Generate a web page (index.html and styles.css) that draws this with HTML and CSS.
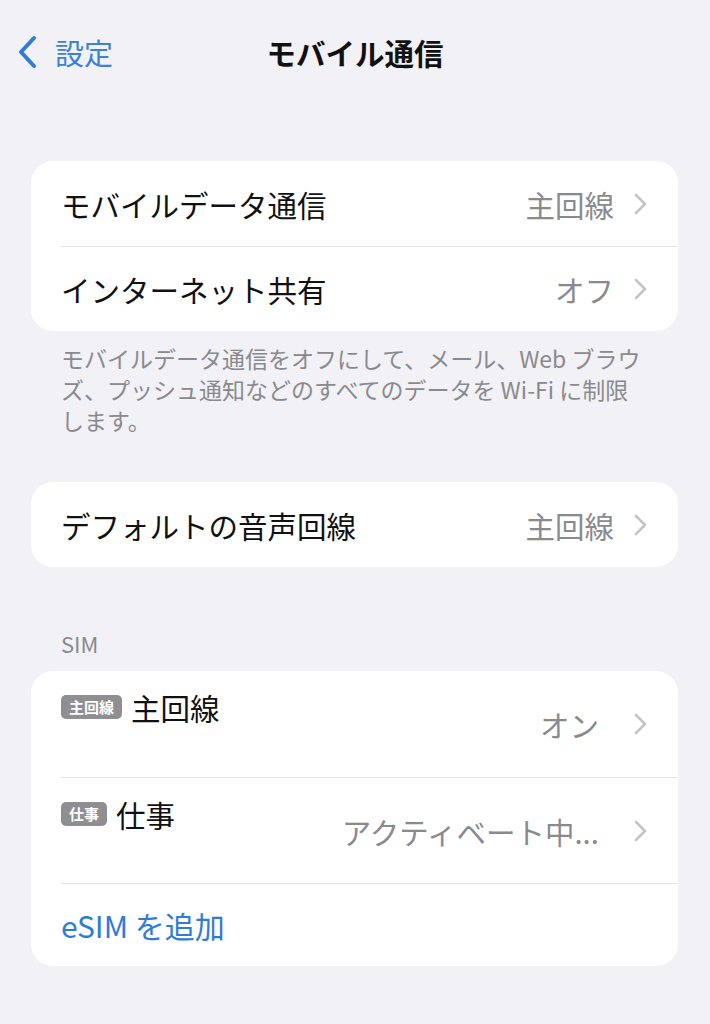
FILE: index.html
```html
<!DOCTYPE html>
<html lang="ja">
<head>
<meta charset="utf-8">
<link rel="stylesheet" href="styles.css">
</head>
<body>
<div class="page">
  <header class="nav">
    <div class="back">
      <svg class="back-chev" width="22" height="34" viewBox="0 0 22 34"><polyline points="18,3 5,17 18,31" fill="none" stroke="#2f7bd8" stroke-width="4" stroke-linecap="round" stroke-linejoin="round"/></svg>
      <span class="back-label">設定</span>
    </div>
    <h1 class="title">モバイル通信</h1>
  </header>

  <section class="card card-first">
    <div class="row">
      <span class="label">モバイルデータ通信</span>
      <span class="value">主回線</span>
      <svg class="chev" width="15" height="22" viewBox="0 0 15 22"><polyline points="3,2 12,11 3,20" fill="none" stroke="#c4c4c8" stroke-width="2.6" stroke-linecap="round" stroke-linejoin="round"/></svg>
    </div>
    <div class="row sep">
      <span class="label">インターネット共有</span>
      <span class="value">オフ</span>
      <svg class="chev" width="15" height="22" viewBox="0 0 15 22"><polyline points="3,2 12,11 3,20" fill="none" stroke="#c4c4c8" stroke-width="2.6" stroke-linecap="round" stroke-linejoin="round"/></svg>
    </div>
  </section>
  <p class="footer">モバイルデータ通信をオフにして、メール、Web ブラウ<br>ズ、プッシュ通知などのすべてのデータを Wi-Fi に制限<br>します。</p>

  <section class="card card-second">
    <div class="row">
      <span class="label">デフォルトの音声回線</span>
      <span class="value">主回線</span>
      <svg class="chev" width="15" height="22" viewBox="0 0 15 22"><polyline points="3,2 12,11 3,20" fill="none" stroke="#c4c4c8" stroke-width="2.6" stroke-linecap="round" stroke-linejoin="round"/></svg>
    </div>
  </section>

  <h2 class="section-head">SIM</h2>
  <section class="card card-sim">
    <div class="row sim-row">
      <div class="sim-name"><span class="badge">主回線</span><span class="label">主回線</span></div>
      <span class="value">オン</span>
      <svg class="chev" width="15" height="22" viewBox="0 0 15 22"><polyline points="3,2 12,11 3,20" fill="none" stroke="#c4c4c8" stroke-width="2.6" stroke-linecap="round" stroke-linejoin="round"/></svg>
    </div>
    <div class="row sim-row sep">
      <div class="sim-name"><span class="badge">仕事</span><span class="label">仕事</span></div>
      <span class="value">アクティベート中...</span>
      <svg class="chev" width="15" height="22" viewBox="0 0 15 22"><polyline points="3,2 12,11 3,20" fill="none" stroke="#c4c4c8" stroke-width="2.6" stroke-linecap="round" stroke-linejoin="round"/></svg>
    </div>
    <div class="row add-row sep">
      <span class="link">eSIM を追加</span>
    </div>
  </section>
</div>
</body>
</html>
```

FILE: styles.css
```css
html, body {
  margin: 0;
  padding: 0;
  background: #f2f2f6;
}
body {
  font-family: "Noto Sans CJK JP", "Noto Sans", sans-serif;
  color: #111;
}
.page {
  width: 710px;
  min-height: 1024px;
  padding-bottom: 40px;
}
.nav {
  height: 104px;
  display: grid;
  grid-template-columns: 1fr auto 1fr;
  align-items: center;
}
.back {
  grid-column: 1;
  grid-row: 1;
  display: flex;
  align-items: center;
  padding-left: 16px;
  gap: 17px;
}
.back-chev { display: block; }
.back-label {
  font-size: 29px;
  line-height: 34px;
  color: #3a82d6;
}
.title {
  grid-column: 2;
  grid-row: 1;
  margin: 0;
  font-size: 29.5px;
  font-weight: 700;
  line-height: 36px;
  color: #111;
}
.card {
  background: #fff;
  border-radius: 22px;
  margin: 0 32px 0 31px;
  overflow: hidden;
}
.card-first { margin-top: 57px; }
.card-second { margin-top: 46px; }
.row {
  height: 85px;
  margin-left: 30px;
  padding-right: 30px;
  display: flex;
  align-items: center;
  box-sizing: border-box;
}
.row.sep { border-top: 1.5px solid #e3e3e7; }
.label {
  font-size: 29.5px;
  line-height: 36px;
  color: #111;
}
.value {
  margin-left: auto;
  font-size: 29.5px;
  line-height: 36px;
  color: #8a8a8e;
}
.chev {
  display: block;
  margin-left: 19px;
  flex: none;
}
.footer {
  margin: 0;
  padding: 12px 20px 0 61px;
  font-size: 23px;
  line-height: 31px;
  color: #8a8a8e;
}
.section-head {
  margin: 63px 0 0 0;
  padding-left: 61px;
  font-size: 22px;
  font-weight: 400;
  line-height: 26px;
  color: #8a8a8e;
  height: 26px;
  padding-bottom: 15px;
}
.sim-row {
  height: 106px;
}
.sim-row .value {
  margin-right: 15px;
}
.sim-name {
  align-self: flex-start;
  padding-top: 18px;
  display: flex;
  align-items: center;
  gap: 9px;
}
.badge {
  background: #8e8e93;
  color: #fff;
  font-size: 15px;
  font-weight: 700;
  line-height: 24px;
  height: 24px;
  padding: 0 8px;
  border-radius: 5px;
}
.add-row {
  height: 83px;
}
.link {
  font-size: 30px;
  line-height: 36px;
  color: #2f7bd8;
}
```
